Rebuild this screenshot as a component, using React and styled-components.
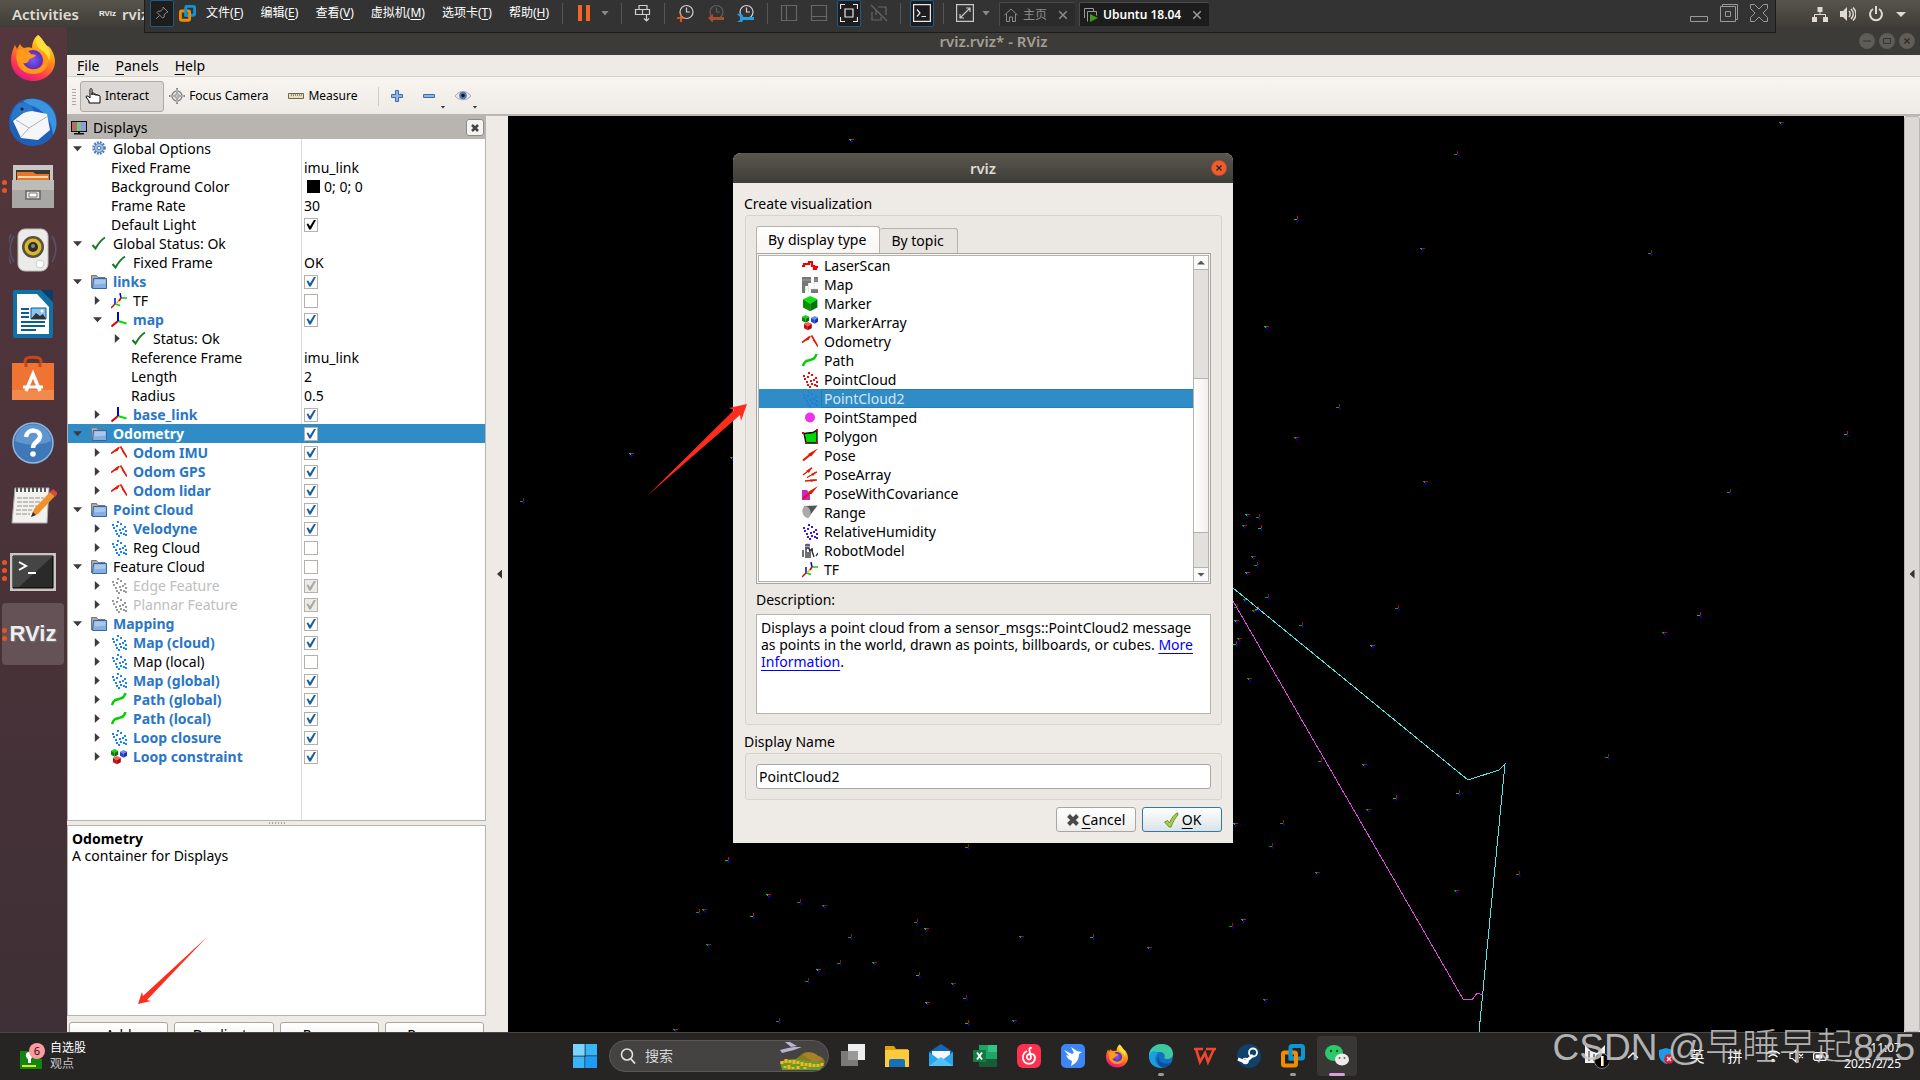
import { useState } from 'react';
import styled, { createGlobalStyle, css } from 'styled-components';

const GlobalStyle = createGlobalStyle`
  * { box-sizing: border-box; }
  body {
    margin: 0;
    background: #000;
    font-family: 'Noto Sans', 'Noto Sans CJK SC', sans-serif;
    font-size: 14px;
    line-height: 18px;
    color: #000;
  }
  button, input {
    font: inherit;
    color: inherit;
    margin: 0;
  }
  svg { display: block; flex: none; }
`;

/* ---------- desktop ---------- */

const Desktop = styled.div`
  display: flex;
  flex-direction: column;
  height: 100vh;
  position: relative;
  overflow: hidden;
`;

const Guest = styled.div`
  flex: 1;
  min-height: 0;
  display: flex;
  flex-direction: column;
  position: relative;
  overflow: hidden;
`;

const GnomeBar = styled.header`
  flex: none;
  height: 27px;
  display: flex;
  align-items: center;
  padding: 0 14px 0 12px;
  gap: 20px;
  background: linear-gradient(#57544b, #3f3d38);
  color: #dfdbd2;
  font-size: 15px;
  font-weight: 600;
`;

const GnomeApp = styled.span`
  display: flex;
  align-items: center;
  gap: 6px;
`;

const GnomeStatus = styled.div`
  margin-left: auto;
  display: flex;
  align-items: center;
  gap: 12px;
`;

const PlainButton = styled.button`
  border: 0;
  padding: 0;
  background: none;
  display: flex;
  align-items: center;
  justify-content: center;
`;

const Session = styled.div`
  flex: 1;
  min-height: 0;
  display: flex;
`;

const Dock = styled.nav`
  flex: none;
  width: 67px;
  background: linear-gradient(#54373d, #483238 60%, #3e3036);
  display: flex;
  flex-direction: column;
`;

const DockItem = styled.button`
  height: 62px;
  margin: 0 3px 2px 2px;
  padding: 0;
  border: 0;
  border-radius: 4px;
  background: ${({ $active }) => ($active ? '#655256' : 'none')};
  display: grid;
  place-items: center;
  position: relative;
`;

const RunningDots = styled.span`
  position: absolute;
  left: 0;
  top: 0;
  bottom: 0;
  display: flex;
  flex-direction: column;
  justify-content: center;
  gap: 3px;

  i {
    width: 5px;
    height: 5px;
    border-radius: 50%;
    background: #e95420;
  }
`;

/* ---------- host toolbar ---------- */

const HostBar = styled.div`
  position: absolute;
  left: 144px;
  right: 144px;
  top: 0;
  height: 33px;
  padding: 0 7px 6px 5px;
  display: flex;
  align-items: center;
  background: #333;
  border: solid #1c1c1c;
  border-width: 0 1px 1px;
  font-size: 12px;
  color: #fff;
`;

const PinButton = styled(PlainButton)`
  width: 24px;
  height: 27px;
  margin-right: 5px;
  background: #1d1d1d;
  border: 1px solid #235a85;
  border-radius: 2px;
`;

const HostMenus = styled.div`
  display: flex;
  gap: 17px;
  padding: 0 13px 0 10px;
  white-space: nowrap;

  u { text-underline-offset: 2px; }
`;

const HostTools = styled.div`
  display: flex;
  align-items: center;
  gap: 12px;
`;

const HostTool = styled(PlainButton)`
  width: 18px;
  height: 18px;
  ${({ $boxed }) => $boxed && css`
    width: 24px;
    height: 27px;
    margin: 0 -3px;
    background: #1d1d1d;
    border: 1px solid #235a85;
    border-radius: 2px;
  `}
`;

const HostRule = styled.span`
  width: 1px;
  height: 21px;
  background: #555;
`;

const Caret = styled.span`
  width: 8px;
  height: 5px;
  margin-left: -4px;
  background: #8a8a8a;
  clip-path: polygon(0 0, 100% 0, 50% 100%);
`;

const HostTabs = styled.div`
  display: flex;
  gap: 4px;
  align-self: flex-end;
  margin-left: 9px;
`;

const HostTab = styled.div`
  height: 24px;
  padding: 0 7px 0 4px;
  display: flex;
  align-items: center;
  gap: 5px;
  border: solid #4a4a4a;
  border-width: 1px 0 0 1px;
  border-radius: 2px 2px 0 0;
  background: ${({ $active }) => ($active ? '#1c1c1c' : '#2b2b2b')};
  color: ${({ $active }) => ($active ? '#fff' : '#8d8d8d')};
  font-weight: ${({ $active }) => ($active ? 600 : 400)};

  button { margin-left: 6px; }
`;

const HostWindowButtons = styled.div`
  margin-left: auto;
  display: flex;
  gap: 12px;
`;

/* ---------- rviz window ---------- */

const Window = styled.main`
  flex: 1;
  min-width: 0;
  display: flex;
  flex-direction: column;
  background: #eeebe7;
`;

const WindowTitle = styled.div`
  flex: none;
  height: 28px;
  display: grid;
  grid-template-columns: 1fr auto 1fr;
  align-items: center;
  padding: 0 5px;
  background: #3c3b37;
  color: #a39f96;
  font-size: 15px;
  font-weight: 600;

  h1 {
    grid-column: 2;
    margin: 0;
    font: inherit;
  }
`;

const TitleButtons = styled.div`
  display: flex;
  justify-content: flex-end;
  gap: 4px;
`;

const MenuBar = styled.div`
  flex: none;
  height: 22px;
  display: flex;
  align-items: center;
  gap: 16px;
  padding: 0 10px;
  border-bottom: 1px solid #d4d1cd;

  u { text-underline-offset: 3px; }
`;

const ToolBar = styled.div`
  flex: none;
  height: 39px;
  display: flex;
  align-items: center;
  padding: 1px 0 0 5px;
  background: linear-gradient(#f8f5f1, #eeebe7);
  border-bottom: 2px solid #bab6b1;
  font-size: 12px;
`;

const Grip = styled.span`
  width: 4px;
  height: 17px;
  margin-right: 4px;
  background: radial-gradient(circle, #aaa 40%, transparent 45%) 0 0 / 2px 3px;
`;

const ToolButton = styled.button`
  height: 31px;
  padding: 0 14px 0 4px;
  display: flex;
  align-items: center;
  gap: 4px;
  border: 1px solid ${({ $pressed }) => ($pressed ? '#aeaaa6' : 'transparent')};
  border-radius: 3px;
  background: ${({ $pressed }) => ($pressed ? '#dcd8d5' : 'none')};
`;

const ToolRule = styled.span`
  width: 1px;
  height: 19px;
  margin: 0 12px 0 6px;
  background: #d0ccc8;
`;

const SmallTool = styled(PlainButton)`
  width: 32px;
  height: 31px;
  justify-content: flex-start;
  position: relative;
`;

const SmallCaret = styled.span`
  position: absolute;
  right: 10px;
  bottom: 3px;
  width: 5px;
  height: 3px;
  background: #333;
  clip-path: polygon(0 0, 100% 0, 50% 100%);
`;

const Workspace = styled.div`
  flex: 1;
  min-height: 0;
  display: flex;
`;

const Sidebar = styled.aside`
  flex: none;
  width: 419px;
  display: flex;
  flex-direction: column;
`;

const PanelTitle = styled.div`
  flex: none;
  height: 23px;
  display: flex;
  align-items: center;
  gap: 6px;
  padding: 0 2px 0 4px;
  background: #b8b4b0;

  h2 {
    margin: 0;
    font: inherit;
  }
`;

const PanelClose = styled(PlainButton)`
  width: 18px;
  height: 17px;
  margin-left: auto;
  border: 1px solid #8f8b87;
  border-radius: 3px;
  background: #f6f4f2;
`;

const Tree = styled.div`
  flex: 1;
  min-height: 0;
  border: solid #b6b2ad;
  border-width: 0 1px 1px;
  background: linear-gradient(#dddbd9, #dddbd9) 233px 0 / 1px 100% no-repeat #fff;
`;

const TreeRow = styled.div`
  height: 19px;
  display: grid;
  grid-template-columns: 236px 1fr;
  align-items: center;
  background: ${({ $selected }) => ($selected ? '#308cc6' : 'none')};
`;

const TreeName = styled.span`
  display: flex;
  align-items: center;
  padding-left: ${({ $level }) => $level * 20}px;
  white-space: nowrap;
  color: ${({ $tone }) => ({ link: '#2a76c6', off: '#bebebe', selected: '#fff' })[$tone] || '#000'};
  font-weight: ${({ $bold }) => ($bold ? 700 : 400)};

  svg { margin-right: 6px; }
`;

const Expander = styled.span`
  width: 9px;
  height: 9px;
  margin: 0 9px 0 5px;
  background: ${({ $state }) => ($state ? '#3c3c3c' : 'none')};
  clip-path: ${({ $state }) => ($state === 'open'
    ? 'polygon(0 25%, 100% 25%, 50% 80%)'
    : 'polygon(20% 0, 75% 50%, 20% 100%)')};
`;

const TreeValue = styled.span`
  display: flex;
  align-items: center;
  gap: 4px;
`;

const Swatch = styled.span`
  width: 13px;
  height: 13px;
  margin-left: 3px;
  background: #000;
`;

const CheckBox = styled.input.attrs({ type: 'checkbox' })`
  appearance: none;
  width: 14px;
  height: 14px;
  border: 1px solid #b4b0ac;
  background: ${({ disabled }) => (disabled ? '#edebe8' : '#fff')};
  display: grid;
  place-items: center;

  &:checked::before {
    content: '';
    width: 10px;
    height: 10px;
    background: ${({ disabled, $dark }) => (disabled ? '#aaa7a4' : $dark ? '#000' : '#1b5fa0')};
    clip-path: polygon(5% 45%, 22% 40%, 40% 68%, 82% 0, 100% 6%, 48% 100%, 32% 100%);
  }
`;

const SplitGrip = styled.span`
  flex: none;
  align-self: center;
  width: 17px;
  height: 4px;
  background: radial-gradient(circle, #a8a5a1 40%, transparent 45%) 0 0 / 3px 4px;
`;

const HelpPane = styled.div`
  flex: none;
  height: 191px;
  padding: 4px;
  border: 1px solid #b6b2ad;
  background: #fff;
  line-height: 17px;

  p { margin: 0; }
`;

const SidebarButtons = styled.div`
  flex: none;
  height: 16px;
  padding: 6px 2px 0;
  display: grid;
  grid-template-columns: repeat(4, 1fr);
  gap: 6px;
  overflow: hidden;
`;

const PushButton = styled.button`
  height: 25px;
  padding: 0 9px;
  display: flex;
  align-items: center;
  justify-content: center;
  gap: 3px;
  border: 1px solid ${({ $primary }) => ($primary ? '#2d7ba8' : '#aaa6a2')};
  border-radius: 3px;
  background: ${({ $primary }) => ($primary
    ? 'linear-gradient(#fdfefe, #dbe3e7)'
    : 'linear-gradient(#fff, #efedeb)')};

  u { text-underline-offset: 3px; }
`;

const CollapseStrip = styled.button`
  flex: none;
  width: ${({ $edge }) => ($edge ? 16 : 22)}px;
  padding: 0;
  border: 1px solid ${({ $edge }) => ($edge ? '#bbb7b3' : 'transparent')};
  border-radius: 3px;
  background: ${({ $edge }) => ($edge ? '#dcd8d5' : 'none')};
  display: flex;
  align-items: center;
  justify-content: ${({ $edge }) => ($edge ? 'center' : 'flex-end')};
  padding-right: ${({ $edge }) => ($edge ? 0 : 5)}px;

  span {
    width: 5px;
    height: 9px;
    background: #333;
    clip-path: polygon(100% 0, 100% 100%, 0 50%);
  }
`;

const RenderView = styled.svg`
  flex: 1;
  min-width: 0;
  width: 100%;
  height: 100%;
  background: #000;
`;

/* ---------- dialog ---------- */

const Dialog = styled.section`
  position: absolute;
  left: 733px;
  top: 153px;
  width: 500px;
  background: #eeebe7;
  border-radius: 8px 8px 0 0;
`;

const DialogTitle = styled.div`
  height: 30px;
  display: grid;
  grid-template-columns: 1fr auto 1fr;
  align-items: center;
  justify-items: end;
  padding: 0 6px;
  border-radius: 8px 8px 0 0;
  background: linear-gradient(#5a574f, #3e3d39);
  color: #dfdbd2;
  font-size: 15px;
  font-weight: 600;

  h2 {
    grid-column: 2;
    margin: 0;
    font: inherit;
  }
`;

const DialogBody = styled.div`
  padding: 4px 11px 11px;
`;

const GroupLabel = styled.label`
  display: block;
  margin: 8px 0 2px;
`;

const Group = styled.div`
  padding: 10px;
  border: 1px solid #d6d2cd;
  border-radius: 3px;
  background: #ebe8e3;
  margin-left: 1px;
`;

const Tabs = styled.div`
  display: flex;
  align-items: flex-end;
`;

const Tab = styled.button`
  height: ${({ $active }) => ($active ? 27 : 25)}px;
  padding: 0 13px 0 11px;
  border: 1px solid #b6b2ad;
  border-bottom: 0;
  border-radius: 3px 3px 0 0;
  background: ${({ $active }) => ($active ? 'linear-gradient(#fff, #f8f6f3)' : '#e7e4e0')};
  ${({ $active }) => !$active && css`border-left: 0;`}
`;

const TabPage = styled.div`
  padding: 1px;
  border: 1px solid #aaa6a2;
  background: #f6f4f2;
`;

const TypeList = styled.div`
  height: 327px;
  display: flex;
  border: 1px solid #b6b2ad;
  background: #fff;
`;

const TypeItems = styled.div`
  flex: 1;
  overflow: hidden;
`;

const TypeItem = styled.div`
  height: 19px;
  padding-left: 43px;
  display: flex;
  align-items: center;
  background: ${({ $selected }) => ($selected ? '#308cc6' : 'none')};
  color: ${({ $selected }) => ($selected ? '#d4e6f3' : '#000')};

  span {
    flex: 1;
    height: 19px;
    margin-left: 3px;
    padding-left: 2px;
    border: 1px solid ${({ $selected }) => ($selected ? '#2a7db3' : 'transparent')};
    border-right: 0;
    line-height: 17px;
  }
`;

const ScrollBar = styled.div`
  width: 15px;
  display: flex;
  flex-direction: column;
  border-left: 1px solid #b6b2ad;
  background: #e2e0dd;
`;

const ScrollStep = styled(PlainButton)`
  height: 14px;
  background: #fafafa;
  border: solid #b6b2ad;
  border-width: ${({ $down }) => ($down ? '1px 0 0' : '0 0 1px')};

  span {
    width: 8px;
    height: 4px;
    background: #555;
    clip-path: ${({ $down }) => ($down
    ? 'polygon(0 0, 100% 0, 50% 100%)'
    : 'polygon(0 100%, 100% 100%, 50% 0)')};
  }
`;

const ScrollTrack = styled.div`
  flex: 1;
  padding-top: 108px;
`;

const ScrollThumb = styled.div`
  height: 155px;
  border: solid #b6b2ad;
  border-width: 1px 0;
  background: linear-gradient(90deg, #fff, #f1efed);
`;

const DescriptionLabel = styled.div`
  margin: 7px 0 5px;
`;

const DescriptionBox = styled.div`
  height: 100px;
  padding: 4px;
  border: 1px solid #b6b2ad;
  background: #fff;
  line-height: 17px;

  a {
    color: #00f;
    text-underline-offset: 3px;
  }
`;

const TextField = styled.input`
  display: block;
  width: 100%;
  height: 25px;
  padding: 0 2px;
  border: 1px solid #aaa6a2;
  border-radius: 3px;
  background: #fff;
`;

const DialogButtons = styled.div`
  display: flex;
  justify-content: flex-end;
  gap: 6px;
  margin-top: 7px;

  button { width: 80px; }
`;

const Annotation = styled.svg`
  position: absolute;
  left: ${({ $left }) => $left}px;
  top: ${({ $top }) => $top}px;
`;

/* ---------- taskbar ---------- */

const TaskBar = styled.footer`
  flex: none;
  height: 48px;
  display: grid;
  grid-template-columns: 1fr auto 1fr;
  align-items: center;
  padding: 0 19px 2px;
  border-top: 1px solid #484746;
  background: #262524;
  color: #fff;
  font-size: 12px;
  line-height: 16px;
`;

const NewsWidget = styled(PlainButton)`
  justify-self: start;
  gap: 5px;
  text-align: left;

  small {
    display: block;
    font-size: 12px;
    color: #c4c4c4;
  }
`;

const TaskGroup = styled.div`
  display: flex;
  align-items: center;
  gap: 4px;
  margin-left: 2px;
`;

const TaskButton = styled(PlainButton)`
  width: 40px;
  height: 40px;
  border-radius: 4px;
  position: relative;
  background: ${({ $active }) => ($active ? '#383736' : 'none')};

  &::after {
    content: '';
    position: absolute;
    bottom: 0;
    width: ${({ $active }) => ($active ? 16 : 6)}px;
    height: 3px;
    border-radius: 2px;
    background: ${({ $active, $running }) => ($active ? '#dc9ce0' : $running ? '#9a9a9a' : 'none')};
  }
`;

const SearchBox = styled.label`
  width: 220px;
  height: 32px;
  padding: 0 3px 0 10px;
  display: flex;
  align-items: center;
  gap: 9px;
  border: 1px solid #5a5958;
  border-radius: 16px;
  background: #444342;

  input {
    flex: 1;
    min-width: 0;
    border: 0;
    padding: 0;
    background: none;
    font-size: 14px;
  }
  input::placeholder {
    color: #d8d8d8;
    opacity: 1;
  }
`;

const Tray = styled.div`
  justify-self: end;
  display: flex;
  align-items: center;
  font-size: 15px;
`;

const TrayItem = styled.span`
  width: ${({ $width }) => $width}px;
  display: flex;
  justify-content: center;
`;

const Clock = styled.time`
  width: 68px;
  text-align: right;
  font-size: 12px;
`;

const Watermark = styled.div`
  position: absolute;
  right: 5px;
  bottom: 10px;
  font-family: 'Liberation Sans', 'Noto Sans CJK SC', sans-serif;
  font-size: 37px;
  font-weight: 300;
  line-height: 44px;
  color: rgba(205, 205, 205, 0.85);
  white-space: nowrap;
  pointer-events: none;
`;

/* ---------- small icons ---------- */

const Svg16 = ({ children, size = 16, box = 16 }) => (
  <svg width={size} height={size} viewBox={`0 0 ${box} ${box}`} fill="none" aria-hidden="true">
    {children}
  </svg>
);

const CLOUD_DOTS = [[6, 0], [1, 3], [5, 4], [9, 2], [13, 5], [2, 6], [4, 9], [8, 8], [11, 7], [14, 9], [5, 12], [9, 11], [12, 12], [7, 14], [14, 13]];

const CloudIcon = ({ color = '#1a84f0' }) => (
  <Svg16>
    {CLOUD_DOTS.map(([x, y]) => (
      <rect key={`${x}-${y}`} x={x} y={y} width="2" height="2" fill={color} />
    ))}
  </Svg16>
);

const FolderIcon = () => (
  <Svg16>
    <path d="M.5 14V1.500h5l1.500 2h7V5" fill="#aaa" stroke="#777" />
    <path d="M2.500 4.500h13v10h-14z" fill="#84afdf" stroke="#3465a4" />
    <path d="M3.500 5.500h11v4l-11 1z" fill="#a9c8ea" />
  </Svg16>
);

const CheckIcon = () => (
  <Svg16>
    <path d="M1.500 9l3 3.500C7 8 10 4 14 1.500" stroke="#1b7a24" strokeWidth="2" />
  </Svg16>
);

const GearIcon = () => (
  <Svg16>
    <circle cx="8" cy="7" r="5.500" stroke="#4a7ab8" strokeWidth="2.500" strokeDasharray="1.800 1.100" />
    <circle cx="8" cy="7" r="4.500" fill="#a4c0e4" stroke="#5a88c4" />
    <circle cx="8" cy="7" r="1.800" fill="#fff" stroke="#4a7ab8" />
  </Svg16>
);

const AxesIcon = () => (
  <Svg16>
    <path d="M7 9L.500 14.500" stroke="#e00000" strokeWidth="2" />
    <path d="M7 9l8.500 2.500" stroke="#00e000" strokeWidth="2" />
    <path d="M7 9V0" stroke="#0000e8" strokeWidth="2" />
  </Svg16>
);

const TfIcon = () => (
  <Svg16>
    <path d="M4 11L0 15" stroke="#e00000" strokeWidth="1.500" />
    <path d="M4 11l5 1.500M10 5h6" stroke="#00d800" strokeWidth="1.500" />
    <path d="M4 11V5M10 5L9 0" stroke="#0000e8" strokeWidth="1.500" />
    <path d="M5 11l5-6" stroke="#e8c020" strokeWidth="1.500" />
    <path d="M8 8l2-3" stroke="#e00000" strokeWidth="1.500" />
  </Svg16>
);

const OdomIcon = () => (
  <Svg16>
    <path d="M0 8.500l8-6M9.500 1.500L16 12.500" stroke="#e81800" strokeWidth="1.600" />
    <path d="M3 7l6.500-6-3 5zM11 3l2.500 6 2.500 4-5-6.500z" fill="#e81800" />
  </Svg16>
);

const PathIcon = () => (
  <Svg16>
    <path d="M1 13c2-6 4-5 7-6s5-1 6.500-6" stroke="#00d000" strokeWidth="2.500" />
  </Svg16>
);

const Cube = ({ x, y, s, top, left, right }) => (
  <g transform={`translate(${x} ${y}) scale(${s})`}>
    <path d="M0 3.500L7.500 0 15 3.500 7.500 8z" fill={top} />
    <path d="M0 3.500L7.500 8v8L0 12z" fill={left} />
    <path d="M15 3.500L7.500 8v8L15 12z" fill={right} />
  </g>
);

const MarkerIcon = () => (
  <Svg16>
    <Cube x={1} y={0} s={0.96} top="#0be00b" left="#069006" right="#077407" />
  </Svg16>
);

const MarkerArrayIcon = () => (
  <Svg16>
    <Cube x={0} y={0} s={0.48} top="#10d810" left="#088808" right="#0a700a" />
    <Cube x={9} y={1} s={0.48} top="#6b8ff5" left="#2346d0" right="#1830a8" />
    <Cube x={2} y={7} s={0.52} top="#f06060" left="#d01010" right="#a80c0c" />
  </Svg16>
);

const LaserIcon = () => (
  <Svg16>
    <path d="M0 8h2V6h5V4h3v4h2v3h2V9h2" stroke="#f00000" strokeWidth="2.200" />
  </Svg16>
);

const MapIcon = () => (
  <Svg16>
    <path d="M0 0h9v6H6v3H3v7H0zM12 0h4v5h-4zM9 12h7v4H9z" fill="#777" />
    <path d="M3.500 9v6M6.500 6v9M0 3h16M3 12h13M9 6h7M12 6v6" stroke="#ccc" strokeWidth=".5" />
  </Svg16>
);

const StampedIcon = () => (
  <Svg16>
    <circle cx="8" cy="7.500" r="5" fill="#f030f0" />
  </Svg16>
);

const PolygonIcon = () => (
  <Svg16>
    <path d="M2 4.500l9-1 4-2.500v13H4z" fill="#00d800" stroke="#000" strokeWidth="1.300" />
    <path d="M0 3h2v2H0zM14 0h2v2h-2zM14 13h2v2h-2zM3 13h2v2H3z" fill="#e00" />
  </Svg16>
);

const PoseIcon = () => (
  <Svg16>
    <path d="M1 12.500l8-6.500" stroke="#e01800" strokeWidth="2.200" />
    <path d="M6 6l10-5.500-7 8z" fill="#e01800" />
  </Svg16>
);

const PoseArrayIcon = () => (
  <Svg16>
    <path d="M1 8l9-7M5 10.500L15 5M3 14l12-1" stroke="#e01800" strokeWidth="1.300" />
    <path d="M4 4l6-4-3 6zM9 7l6-3-4 5zM8 12.500l7 0-6 2.500z" fill="#e01800" />
  </Svg16>
);

const PoseCovIcon = () => (
  <Svg16>
    <path d="M0 4h5l3 5v5H0z" fill="#c82ac8" />
    <path d="M1 12.500l8-6.500" stroke="#e01800" strokeWidth="2.200" />
    <path d="M6 6l10-6-7 8.500z" fill="#e01800" />
  </Svg16>
);

const RangeIcon = () => (
  <Svg16>
    <path d="M2 1l13.500-.500L6 13z" fill="#555" />
    <ellipse cx="4.500" cy="7" rx="4" ry="6" fill="#aaa" transform="rotate(-15 4.500 7)" />
  </Svg16>
);

const RobotIcon = () => (
  <Svg16>
    <path d="M3 1.500c0-1 5-1 5 0v2H3z" fill="#555e80" />
    <path d="M1 7v7M3 5h4l1 4v6M4 6v9M6 9v6M10 5v3l2 6M14 13l2-3M8 7h3" stroke="#222" strokeWidth="1.300" />
  </Svg16>
);

const WrenchStubIcon = () => (
  <Svg16>
    <path d="M1 0h2v3H1zM12 0h3v3h-3z" fill="#111" />
  </Svg16>
);

const MonitorIcon = () => (
  <Svg16>
    <path d="M0 1h16v11H0z" fill="#111" />
    <path d="M1 2h5v9H1z" fill="#b86a6a" />
    <path d="M6 2h4v9H6z" fill="#6fc98a" />
    <path d="M10 2h5v9h-5z" fill="#9a98d8" />
    <path d="M7 12h2v1h4v1.500H3V13h4z" fill="#111" />
  </Svg16>
);

const CrossGlyph = ({ color = '#444', size = 8, width = 2.5 }) => (
  <Svg16 size={size} box={8}>
    <path d="M1 1l6 6M7 1L1 7" stroke={color} strokeWidth={width} />
  </Svg16>
);

const HandIcon = () => (
  <Svg16>
    <path d="M5 9V2c0-2 2-2 2 0v5V5.500c0-1 2-1 2 0V7c0-1.500 2-1.500 2 0v.500c0-1.300 2-1.300 2 0V8c0-1 2-1 2 .500V15H4v-2L1 9c0-1.500 2-1.500 4 1z" fill="#fff" stroke="#000" />
  </Svg16>
);

const FocusIcon = () => (
  <Svg16>
    <circle cx="8" cy="8" r="5" stroke="#888" strokeWidth="1.500" />
    <circle cx="8" cy="8" r="2.500" stroke="#999" />
    <path d="M8 0v16M0 8h16" stroke="#888" strokeWidth="2" />
    <path d="M8 1v14M1 8h14" stroke="#eee" strokeWidth=".7" />
  </Svg16>
);

const RulerIcon = () => (
  <Svg16>
    <path d="M.500 5.500h15v5H.500z" fill="#e9dfb0" stroke="#6a6a5a" />
    <path d="M3.500 6v2M5.500 6v2M7.500 6v2M9.500 6v2M11.500 6v2M13.500 6v2" stroke="#777" strokeWidth=".8" />
  </Svg16>
);

const PlusIcon = () => (
  <Svg16 size={12} box={12}>
    <path d="M4.500.500h3v4h4v3h-4v4h-3v-4h-4v-3h4z" fill="#8cb4e4" stroke="#3a6cb0" />
  </Svg16>
);

const MinusIcon = () => (
  <Svg16 size={12} box={12}>
    <path d="M.500 4.500h11v3H.500z" fill="#8cb4e4" stroke="#3a6cb0" />
  </Svg16>
);

const EyeIcon = () => (
  <Svg16>
    <path d="M0 8c4-6 12-6 16 0-4 5-12 5-16 0z" fill="#e8e8e8" stroke="#aaa" />
    <circle cx="8" cy="7.500" r="3.800" fill="#5a74b0" />
    <circle cx="8" cy="7.500" r="1.800" fill="#101828" />
  </Svg16>
);

const OkIcon = () => (
  <Svg16>
    <path d="M1.500 10l3-1.500 2 2.500C8.500 6 11 2.500 14.500.800L15 3c-3 3-5 7-7 12H6z" fill="#a6d04a" stroke="#5d7f1e" strokeWidth=".8" />
  </Svg16>
);

const RoundButton = ({ kind, hot }) => (
  <Svg16>
    <circle cx="8" cy="8" r="7.700" fill={hot ? '#ee5d30' : '#5f5d57'} stroke={hot ? '#c03c14' : '#5f5d57'} strokeWidth=".6" />
    {kind === 'min' && <path d="M4 8h8" stroke="#35342f" />}
    {kind === 'max' && <path d="M4.500 5.500h7v5h-7z" stroke="#35342f" />}
    {kind === 'close' && <path d="M5.500 5.500l5 5M10.500 5.500l-5 5" stroke="#35241f" strokeWidth="1.200" />}
  </Svg16>
);

/* ---------- host toolbar icons ---------- */

// two interlocked rounded squares
const VmwareIcon = ({ size = 18 }) => (
  <Svg16 size={size} box={24}>
    <rect x="9.500" y="2" width="12.500" height="12.500" rx="1.500" stroke="#0d96d6" strokeWidth="4" />
    <rect x="2" y="8.500" width="13" height="13" rx="1.500" stroke="#f28b00" strokeWidth="4" />
    <path d="M9.500 6v8.500H13" stroke="#0d96d6" strokeWidth="4" />
  </Svg16>
);

const PinIcon = () => (
  <Svg16 size={14} box={14}>
    <path d="M8 1l5 5-1.500.500-2.500 2.500.300 2L7.500 12 2 6.500 3.500 5l2 .300L8 2.500zM4.500 9.500L1 13" stroke="#8a8a8a" />
  </Svg16>
);

const PauseIcon = () => (
  <Svg16 size={18} box={18}>
    <path d="M3 1h4v16H3zM11 1h4v16h-4z" fill="#f26522" />
  </Svg16>
);

const KeysIcon = () => (
  <Svg16 size={18} box={18}>
    <path d="M5 1.500h8v4H5zM1.500 5.500h7v5h-7zM8.500 5.500h7v5h-7zM12.500 10.500V17M10 14.500l2.500 2.500 2.500-2.500" stroke="#d0d0d0" strokeWidth="1.200" />
  </Svg16>
);

const ClockFace = ({ dim, children }) => (
  <Svg16 size={18} box={18}>
    <circle cx="9.500" cy="8" r="6.500" stroke={dim ? '#606060' : '#d0d0d0'} strokeWidth="1.200" />
    <path d="M9.500 3.500V8H13" stroke={dim ? '#606060' : '#d0d0d0'} strokeWidth="1.200" />
    {children}
  </Svg16>
);

const PanelToggleIcon = ({ d }) => (
  <Svg16 size={18} box={18}>
    <path d={d} stroke="#666" strokeWidth="1.200" />
  </Svg16>
);

/* ---------- dock and taskbar logos ---------- */

const FirefoxLogo = ({ size = 48 }) => (
  <svg width={size} height={size} viewBox="0 0 48 48" aria-hidden="true">
    <defs>
      <linearGradient id={`ff${size}`} x1=".8" y1="0" x2=".3" y2="1">
        <stop offset="0" stopColor="#fff14a" />
        <stop offset=".4" stopColor="#ff980e" />
        <stop offset=".75" stopColor="#ff3a4f" />
        <stop offset="1" stopColor="#e31587" />
      </linearGradient>
      <radialGradient id={`fg${size}`}>
        <stop offset="0" stopColor="#7a5af8" />
        <stop offset="1" stopColor="#5b2bb8" />
      </radialGradient>
    </defs>
    <path d="M29 1c5 4 6 8 9 11 3-1 8 9 8 15 0 12-10 20-22 20S2 38 2 26c0-6 2-11 4-15l2 4 3-5c1 2 2 3 4 4 3-1 6-1 8 0 0-5 2-10 6-13z" fill={`url(#ff${size})`} />
    <circle cx="24" cy="26" r="10" fill={`url(#fg${size})`} />
    <path d="M8 17c4-3 11-2 14 3l5 1c-1 3-6 3-7 5s-2 4-6 3c3 6 12 9 19 3 3-3 4-10 0-14 8 4 8 15 0 20-8 4-20 2-24-7-2-5-2-10-1-14z" fill="#ff9a1a" />
    <path d="M29 1c5 4 6 8 9 11 3 4 4 10 2 15-1-6-5-10-9-12-4-3-5-9-2-14z" fill="#ffdf3c" />
  </svg>
);

const ThunderbirdLogo = () => (
  <svg width="50" height="50" viewBox="0 0 50 50" aria-hidden="true">
    <path d="M10 6c8-7 25-6 33 3 8 10 8 24-1 33-7 7-16 8-24 6C7 45 1 35 1 25 1 17 5 9 10 6z" fill="#1f5fb8" />
    <path d="M15 4c9-5 22-1 29 8 5 7 6 18 1 26-1-12-7-23-18-28-5-2-9-3-12-6z" fill="#3a94e0" />
    <path d="M5 24l14-11 20 4 3 16-12 10-17-2z" fill="#f4f6f8" />
    <path d="M8 23l13 8 19-12M21 31l-8 9" stroke="#aab4c0" fill="none" />
    <path d="M11 6c5-1 13 1 15 8-4 0-11 1-15 5L3 24c0-7 3-14 8-18z" fill="#2a78cc" />
    <circle cx="14" cy="12" r="1.500" fill="#06182c" />
  </svg>
);

const FilesLogo = () => (
  <svg width="48" height="48" viewBox="0 0 48 48" aria-hidden="true">
    <path d="M4 3h40v18H4z" fill="#c9c7c4" />
    <path d="M7 8h34v14H7z" fill="#3a3634" />
    <path d="M8 10h16l3 2h13v10H8z" fill="#e8762a" />
    <path d="M9 14h30v2H9z" fill="#fbd9a8" />
    <path d="M3 18h42v28H3z" fill="#a9a7a4" />
    <path d="M3 18h42v10H3z" fill="#bebcb9" />
    <path d="M17 29h14v8H17z" fill="#e8e6e3" stroke="#666" strokeWidth="1.500" />
    <path d="M20 31h8v4h-8z" fill="#fff" stroke="#777" />
  </svg>
);

const SpeakerLogo = () => (
  <svg width="48" height="48" viewBox="0 0 48 48" aria-hidden="true">
    <path d="M5 10c-5 8-5 18 0 26M43 10c5 8 5 18 0 26M2 8c-4 9-4 21 0 30" stroke="#56628a" fill="none" strokeWidth="1.500" opacity=".7" />
    <rect x="9" y="3" width="30" height="42" rx="7" fill="#ebebe9" stroke="#bbb" />
    <circle cx="24" cy="21" r="11" fill="#55523e" />
    <circle cx="24" cy="21" r="8.500" fill="#d9b82a" />
    <circle cx="24" cy="21" r="5" fill="#2e2d2b" />
    <circle cx="24" cy="20" r="2" fill="#8a8880" />
    <circle cx="31" cy="38" r="4" fill="#fff" stroke="#ccc" />
  </svg>
);

const WriterLogo = () => (
  <svg width="48" height="50" viewBox="0 0 48 50" aria-hidden="true">
    <path d="M4 3a2 2 0 012-2h26l12 12v34a2 2 0 01-2 2H6a2 2 0 01-2-2z" fill="#1071a8" />
    <path d="M8 5h20l12 13v27H8z" fill="#fff" />
    <path d="M32 1h12v12z" fill="#0a3e66" />
    <path d="M12 20h8M12 24h8M12 28h8M12 33h24M12 37h24M12 41h15" stroke="#0d5c94" strokeWidth="2" />
    <path d="M22 19h15v11H22z" fill="#8ac4ee" stroke="#0d5c94" />
    <path d="M22 30l5-6 4 3 3-2 3 5z" fill="#333" />
    <circle cx="33" cy="22" r="1.500" fill="#fff" />
  </svg>
);

const SoftwareLogo = () => (
  <svg width="48" height="48" viewBox="0 0 48 48" aria-hidden="true">
    <path d="M16 14V7c0-5 16-5 16 0v7" stroke="#c6471c" strokeWidth="3" fill="none" />
    <path d="M3 9h42v37H3z" fill="#ef7434" />
    <path d="M3 36h42v10H3z" fill="#f38a4c" />
    <path d="M17 13V9M31 13V9" stroke="#c6471c" strokeWidth="3" />
    <path d="M17 37l7-17 7 17" stroke="#fff" strokeWidth="3.500" fill="none" />
    <path d="M14 33h20" stroke="#fff" strokeWidth="3" />
  </svg>
);

const HelpLogo = () => (
  <svg width="48" height="48" viewBox="0 0 48 48" aria-hidden="true">
    <circle cx="24" cy="25" r="20" fill="#3f78b8" stroke="#8fb4dc" strokeWidth="1.500" />
    <path d="M6 23c2-22 34-22 36 0-12 5-24 5-36 0z" fill="#5f96d0" />
    <path d="M17 19c1-9 15-8 14 0-1 5-7 5-7 11" stroke="#fff" strokeWidth="4.500" fill="none" />
    <circle cx="24" cy="36" r="2.800" fill="#fff" />
  </svg>
);

const GeditLogo = () => (
  <svg width="48" height="48" viewBox="0 0 48 48" aria-hidden="true">
    <path d="M6 6h34l-2 35H3z" fill="#f2f1ee" stroke="#aaa" />
    <path d="M8 5v5M12 5v5M16 5v5M20 5v5M24 5v5M28 5v5M32 5v5M36 5v5" stroke="#555" strokeWidth="2" />
    <path d="M8 16h27M8 20h24M8 24h20M7 28h16M7 32h14" stroke="#b5b3af" strokeWidth="1.500" strokeDasharray="5 1" />
    <path d="M22 35l3-8 16-17 5 4-17 18z" fill="#f0922c" />
    <path d="M41 10l3-3 5 4-3 4z" fill="#d8483c" />
    <path d="M22 35l2-5 3 3z" fill="#333" />
  </svg>
);

const TerminalLogo = () => (
  <svg width="48" height="48" viewBox="0 0 48 48" aria-hidden="true">
    <path d="M1 7h46v38H1z" fill="#c8c6c2" />
    <path d="M4 10h40v32H4z" fill="#2a2a2a" stroke="#000" />
    <path d="M4 10h40L10 41H4z" fill="#454545" />
    <path d="M10 16l7 4-7 4M19 27h8" stroke="#fff" strokeWidth="2" fill="none" />
  </svg>
);

const RvizWord = styled.span`
  font-family: 'Liberation Sans', sans-serif;
  font-size: ${({ $small }) => ($small ? 8 : 22)}px;
  font-weight: 700;
  line-height: 1;
  color: #eee;
  text-shadow: ${({ $small }) => ($small ? 'none' : '1px 1px 1px #777')};
`;

const StartLogo = () => (
  <Svg16 size={24} box={24}>
    <path d="M0 0h11.500v11.500H0zM12.500 0H24v11.500H12.500zM0 12.500h11.500V24H0zM12.500 12.500H24V24H12.500z" fill="#38b4f8" />
    <path d="M0 0h11.500v11.500H0z" fill="#7ad4fb" />
    <path d="M12.500 12.500H24V24H12.500z" fill="#1c9cf4" />
  </Svg16>
);

const FieldArt = () => (
  <svg width="46" height="28" viewBox="0 0 46 28" aria-hidden="true">
    <path d="M14 18c6-1 8-8 15-8s7 3 11 4 5 4 6 6l-3 6H8z" fill="#8a7a22" />
    <path d="M24 13c4-4 12-3 15 1l5 3-8 4z" fill="#a8802a" />
    <path d="M1 20c8-5 24-2 44 1l-4 7H3z" fill="#6a9a30" />
    <path d="M3 19v3M7 17v4M6 24v2M11 18v3M10 23v4M15 18v4M14 25v2M19 19v3M19 24v3M23 20v4M27 21v3M26 25v2M31 21v4M35 22v3M39 22v3M43 21v3" stroke="#f4b81c" strokeWidth="3" />
    <path d="M1 8l8-2 6-1 8 0-8 3-4 1-8 2zM6 0l6 5 6-1L11 0z" fill="#b9b4d4" />
  </svg>
);

const TASKS = [
  { name: 'Task view', icon: <Svg16 size={24} box={24}><path d="M7 0h17v16H7z" fill="#eee" /><path d="M0 7h17v15H0z" fill="#8a8a8a" opacity=".85" /></Svg16> },
  { name: 'Files', icon: <Svg16 size={24} box={24}><path d="M0 2h9l2 3h12v8H0z" fill="#e0a010" /><path d="M0 6h24v17H0z" fill="#fccb3c" /><path d="M4 17a2 2 0 012-2h12a2 2 0 012 2v6H4z" fill="#1670b8" /></Svg16> },
  { name: 'Mail', icon: <Svg16 size={24} box={24}><path d="M12 0l12 8v14H0V8z" fill="#1267b4" /><path d="M3 7h18v9H3z" fill="#f4f8fc" /><path d="M0 8l12 9 12-9v14H0z" fill="#2ba4ee" /><path d="M0 22l12-9 12 9z" fill="#54c0f8" /></Svg16> },
  { name: 'Excel', icon: <Svg16 size={24} box={24}><path d="M6 1h18v22H6z" fill="#21a366" /><path d="M15 1h9v7h-9z" fill="#33c481" /><path d="M6 15h18v8H6z" fill="#185c37" /><path d="M0 6h13v12H0z" fill="#107c41" /><path d="M4 8.500l5 7M9 8.500l-5 7" stroke="#fff" strokeWidth="1.800" /></Svg16> },
  { name: 'NetEase Music', icon: <Svg16 size={24} box={24}><rect width="24" height="24" rx="6" fill="#fc3150" /><path d="M15 4c-3-1-3 1-2 5l1 4c0 4-5 3-4-1 1-3 7-3 8 1 1 9-13 9-12 0 0-3 2-5 4-6" stroke="#fff" strokeWidth="1.800" /></Svg16> },
  { name: 'Bird', icon: <Svg16 size={24} box={24}><rect width="24" height="24" rx="5" fill="#3c86f8" /><path d="M3 6l8 4 4-3 6 1-3 2c0 5-2 9-8 12l1-5c-3-1-5-3-6-6l3 1zM10 3l6 4-3 2z" fill="#fff" /></Svg16> },
  { name: 'Firefox', icon: <FirefoxLogo size={24} /> },
  { name: 'Edge', running: true, icon: <Svg16 size={24} box={24}><circle cx="12" cy="12" r="12" fill="#1470c4" /><path d="M0 11C1-3 24-4 24 10c0 5-6 6-9 4 2-2 0-6-4-6-6 0-10 2-11 6z" fill="#3cc8a0" /><path d="M9 9c-6 6-1 14 6 15-5 0-15-1-15-12 1-5 7-6 9-3z" fill="#1aa0e0" /><path d="M10 12c-2 6 6 10 13 6-3 5-9 7-12 4s-4-7-1-10z" fill="#0c50a0" /></Svg16> },
  { name: 'WPS', icon: <Svg16 size={24} box={24}><path d="M1 5h9M3 5l4 13 5-9 3 9 6-13h2M13 5h7" stroke="#f0462c" strokeWidth="2.600" /></Svg16> },
  { name: 'Steam', icon: <Svg16 size={24} box={24}><circle cx="12" cy="12" r="12" fill="#10406c" /><path d="M1 15l7 3 5-4 3-3" stroke="#fff" strokeWidth="3" /><circle cx="16" cy="8.500" r="4" stroke="#fff" strokeWidth="1.800" /><circle cx="8.500" cy="17" r="2.500" stroke="#fff" strokeWidth="1.500" /></Svg16> },
  { name: 'VMware', running: true, icon: <VmwareIcon size={24} /> },
  { name: 'WeChat', active: true, icon: <Svg16 size={24} box={24}><ellipse cx="9" cy="9" rx="9" ry="8" fill="#2ec86a" /><circle cx="6" cy="7" r="1.200" fill="#0c5a2a" /><circle cx="12" cy="7" r="1.200" fill="#0c5a2a" /><ellipse cx="17" cy="15.500" rx="7" ry="6" fill="#ececec" /><circle cx="14.500" cy="14" r="1" fill="#666" /><circle cx="19.500" cy="14" r="1" fill="#666" /></Svg16> },
];

/* ---------- data ---------- */

const DISPLAYS = [
  { name: 'Global Options', icon: <GearIcon />, open: true },
  { name: 'Fixed Frame', level: 1, value: 'imu_link' },
  { name: 'Background Color', level: 1, value: '0; 0; 0', swatch: true },
  { name: 'Frame Rate', level: 1, value: '30' },
  { name: 'Default Light', level: 1, checked: true, dark: true },
  { name: 'Global Status: Ok', icon: <CheckIcon />, open: true },
  { name: 'Fixed Frame', level: 1, icon: <CheckIcon />, value: 'OK' },
  { name: 'links', icon: <FolderIcon />, open: true, tone: 'link', checked: true },
  { name: 'TF', level: 1, icon: <TfIcon />, open: false, checked: false },
  { name: 'map', level: 1, icon: <AxesIcon />, open: true, tone: 'link', checked: true },
  { name: 'Status: Ok', level: 2, icon: <CheckIcon />, open: false },
  { name: 'Reference Frame', level: 2, value: 'imu_link' },
  { name: 'Length', level: 2, value: '2' },
  { name: 'Radius', level: 2, value: '0.5' },
  { name: 'base_link', level: 1, icon: <AxesIcon />, open: false, tone: 'link', checked: true },
  { name: 'Odometry', icon: <FolderIcon />, open: true, tone: 'selected', checked: true },
  { name: 'Odom IMU', level: 1, icon: <OdomIcon />, open: false, tone: 'link', checked: true },
  { name: 'Odom GPS', level: 1, icon: <OdomIcon />, open: false, tone: 'link', checked: true },
  { name: 'Odom lidar', level: 1, icon: <OdomIcon />, open: false, tone: 'link', checked: true },
  { name: 'Point Cloud', icon: <FolderIcon />, open: true, tone: 'link', checked: true },
  { name: 'Velodyne', level: 1, icon: <CloudIcon />, open: false, tone: 'link', checked: true },
  { name: 'Reg Cloud', level: 1, icon: <CloudIcon />, open: false, checked: false },
  { name: 'Feature Cloud', icon: <FolderIcon />, open: true, checked: false },
  { name: 'Edge Feature', level: 1, icon: <CloudIcon color="#999" />, open: false, tone: 'off', checked: true },
  { name: 'Plannar Feature', level: 1, icon: <CloudIcon color="#999" />, open: false, tone: 'off', checked: true },
  { name: 'Mapping', icon: <FolderIcon />, open: true, tone: 'link', checked: true },
  { name: 'Map (cloud)', level: 1, icon: <CloudIcon />, open: false, tone: 'link', checked: true },
  { name: 'Map (local)', level: 1, icon: <CloudIcon />, open: false, checked: false },
  { name: 'Map (global)', level: 1, icon: <CloudIcon />, open: false, tone: 'link', checked: true },
  { name: 'Path (global)', level: 1, icon: <PathIcon />, open: false, tone: 'link', checked: true },
  { name: 'Path (local)', level: 1, icon: <PathIcon />, open: false, tone: 'link', checked: true },
  { name: 'Loop closure', level: 1, icon: <CloudIcon />, open: false, tone: 'link', checked: true },
  { name: 'Loop constraint', level: 1, icon: <MarkerArrayIcon />, open: false, tone: 'link', checked: true },
];

const TYPES = [
  ['LaserScan', <LaserIcon />],
  ['Map', <MapIcon />],
  ['Marker', <MarkerIcon />],
  ['MarkerArray', <MarkerArrayIcon />],
  ['Odometry', <OdomIcon />],
  ['Path', <PathIcon />],
  ['PointCloud', <CloudIcon color="#e80c0c" />],
  ['PointCloud2', <CloudIcon color="#1f7fd8" />],
  ['PointStamped', <StampedIcon />],
  ['Polygon', <PolygonIcon />],
  ['Pose', <PoseIcon />],
  ['PoseArray', <PoseArrayIcon />],
  ['PoseWithCovariance', <PoseCovIcon />],
  ['Range', <RangeIcon />],
  ['RelativeHumidity', <CloudIcon color="#3c14e8" />],
  ['RobotModel', <RobotIcon />],
  ['TF', <TfIcon />],
  ['', <WrenchStubIcon />],
];

const DOCK = [
  { name: 'Firefox', icon: <FirefoxLogo /> },
  { name: 'Thunderbird', icon: <ThunderbirdLogo /> },
  { name: 'Files', icon: <FilesLogo />, dots: 2 },
  { name: 'Rhythmbox', icon: <SpeakerLogo /> },
  { name: 'Writer', icon: <WriterLogo /> },
  { name: 'Software', icon: <SoftwareLogo /> },
  { name: 'Help', icon: <HelpLogo /> },
  { name: 'Text Editor', icon: <GeditLogo /> },
  { name: 'Terminal', icon: <TerminalLogo />, dots: 3 },
  { name: 'RViz', icon: <RvizWord>RViz</RvizWord>, dots: 2, active: true },
];

const HOST_MENUS = [['文件', 'F'], ['编辑', 'E'], ['查看', 'V'], ['虚拟机', 'M'], ['选项卡', 'T'], ['帮助', 'H']];

// frame axes scattered over the scene
const FRAMES = [
  [851, 140], [1457, 154], [1781, 123], [1297, 219], [1422, 249], [1651, 253], [1266, 327], [1339, 407],
  [1296, 438], [1847, 434], [1425, 482], [1730, 492], [631, 454], [523, 501], [732, 458], [1700, 615],
  [1664, 633], [1608, 757], [1247, 515], [1259, 517], [1244, 526], [1261, 528], [1253, 557], [1257, 565],
  [1247, 573], [1268, 597], [1245, 600], [1258, 609], [1254, 611], [1237, 607], [1236, 621], [1302, 625],
  [1239, 639], [1236, 644], [1249, 679], [1398, 608], [1372, 646], [1321, 761], [1364, 765], [1396, 798],
  [1368, 810], [1283, 823], [1235, 824], [1272, 846], [1317, 873], [1459, 793], [1456, 891], [1519, 874],
  [1243, 920], [1232, 926], [1265, 1000], [728, 860], [704, 910], [699, 912], [768, 895], [800, 902],
  [824, 906], [753, 916], [708, 945], [917, 922], [926, 929], [851, 937], [1021, 937], [1093, 937],
  [1149, 948], [840, 963], [818, 970], [808, 981], [874, 963], [919, 975], [953, 984], [966, 998],
  [927, 1003], [779, 1021], [1014, 1021], [968, 1023], [675, 1030], [968, 847],
];

const Scene = () => (
  <RenderView viewBox="508 116 1396 916" preserveAspectRatio="xMinYMin slice" shapeRendering="crispEdges">
    {FRAMES.map(([x, y], i) => (
      <g key={`${x}-${y}`} opacity={i % 3 ? 0.8 : 1}>
        <path d={i % 2 ? `M${x} ${y}h-3v1h3z` : `M${x - 2} ${y - 1}h2v2h-1v-1h-1z`} fill="#00d800" />
        <path d={i % 2 ? `M${x} ${y}h1v-3h-1z` : `M${x} ${y}h3v-1h-3z`} fill="#f00000" />
        <path d={`M${x} ${y}h1v1h1v1h-1v1h-1z`} fill="#0000f0" />
      </g>
    ))}
    <path d="M1233 588l235 192 31-10 6-6-26 268" fill="none" stroke="#4fe6e6" strokeWidth="1" />
    <path d="M1233 601l230 398 9 1 5-7 6 2" fill="none" stroke="#e04ce0" strokeWidth="1" />
  </RenderView>
);

const HostToolbar = () => (
  <HostBar>
    <PinButton aria-label="Pin"><PinIcon /></PinButton>
    <VmwareIcon size={17} />
    <HostMenus>
      {HOST_MENUS.map(([label, key]) => (
        <span key={key}>
          {label}
          (
          <u>{key}</u>
          )
        </span>
      ))}
    </HostMenus>
    <HostTools>
      <HostRule />
      <HostTool aria-label="Pause"><PauseIcon /></HostTool>
      <Caret />
      <HostRule />
      <HostTool aria-label="Send keys"><KeysIcon /></HostTool>
      <HostRule />
      <HostTool aria-label="Take snapshot">
        <ClockFace><path d="M4 10v8M0 14h8" stroke="#f26522" strokeWidth="1.600" /></ClockFace>
      </HostTool>
      <HostTool aria-label="Revert snapshot">
        <ClockFace dim><path d="M1 14l5-4v3h11v3H6v3z" fill="#a5502c" /></ClockFace>
      </HostTool>
      <HostTool aria-label="Manage snapshots">
        <ClockFace><path d="M0 10c5-1 6 1 6 3h11v3H6c0 2-3 3-6 2l3-2v-3z" fill="#2a9ce0" /></ClockFace>
      </HostTool>
      <HostRule />
      <HostTool aria-label="Library"><PanelToggleIcon d="M1.500 1.500h15v15h-15zM6.500 1.500v15" /></HostTool>
      <HostTool aria-label="Thumbnails"><PanelToggleIcon d="M1.500 1.500h15v15h-15zM1.500 12.500h15" /></HostTool>
      <HostTool $boxed aria-label="Full screen">
        <Svg16 size={18} box={18}>
          <path d="M.500 5V.500H5M13 .500h4.500V5M17.500 13v4.500H13M5 17.500H.500V13M5 5h8v8H5z" stroke="#e8e8e8" strokeWidth="1.200" />
        </Svg16>
      </HostTool>
      <HostTool aria-label="Unity"><PanelToggleIcon d="M1 1l16 16M8 3h8v8M2 8v8h9v-3M6 6v5" /></HostTool>
      <HostRule />
      <HostTool $boxed aria-label="Console">
        <Svg16 size={18} box={18}>
          <path d="M.600.600h16.800v16.800H.600zM4 5.500L7 9l-3 3.500M8.500 12.500H13" stroke="#e8e8e8" strokeWidth="1.200" />
        </Svg16>
      </HostTool>
      <HostRule />
      <HostTool aria-label="Stretch guest">
        <Svg16 size={18} box={18}>
          <path d="M.600.600h16.800v16.800H.600zM4 14L14 4M10 4h4v4M4 10v4h4" stroke="#c8c8c8" strokeWidth="1.200" />
        </Svg16>
      </HostTool>
      <Caret />
    </HostTools>
    <HostTabs>
      <HostTab>
        <Svg16 size={14} box={14}>
          <path d="M.500 7L7 1l6.500 6M2.500 6v7.500h3V9h3v4.500h3V6" stroke="#8d8d8d" />
        </Svg16>
        主页
        <PlainButton aria-label="Close tab"><CrossGlyph color="#8d8d8d" size={10} width={1.2} /></PlainButton>
      </HostTab>
      <HostTab $active>
        <Svg16 size={14} box={14}>
          <path d="M.500 10V.500h9V3M3.500 13.500v-10h9v4" stroke="#9a9a9a" />
          <path d="M6 6l8 4-8 4z" fill="#3f9a14" />
        </Svg16>
        Ubuntu 18.04
        <PlainButton aria-label="Close tab"><CrossGlyph color="#9a9a9a" size={10} width={1.2} /></PlainButton>
      </HostTab>
    </HostTabs>
    <HostWindowButtons>
      <HostTool aria-label="Minimize">
        <Svg16 size={18} box={18}><path d="M.500 12.500h17v5H.500z" stroke="#9a9a9a" /></Svg16>
      </HostTool>
      <HostTool aria-label="Restore">
        <Svg16 size={18} box={18}>
          <path d="M2.500 2.500v-2h15v15h-2M.500 2.500h15v15H.500zM5.500 7.500h5v5h-5z" stroke="#9a9a9a" />
        </Svg16>
      </HostTool>
      <HostTool aria-label="Close">
        <Svg16 size={18} box={18}>
          <path d="M.500.500h4L9 5 13.500.500h4v4L13 9l4.500 4.500v4h-4L9 13l-4.500 4.500h-4v-4L5 9 .500 4.500z" stroke="#9a9a9a" />
        </Svg16>
      </HostTool>
    </HostWindowButtons>
  </HostBar>
);

const DisplaysPanel = () => (
  <Sidebar>
    <PanelTitle>
      <MonitorIcon />
      <h2>Displays</h2>
      <PanelClose aria-label="Close panel"><CrossGlyph /></PanelClose>
    </PanelTitle>
    <Tree role="tree" aria-label="Displays">
      {DISPLAYS.map((d, i) => (
        // eslint-disable-next-line react/no-array-index-key
        <TreeRow key={i} role="treeitem" $selected={d.tone === 'selected'}>
          <TreeName $level={d.level || 0} $tone={d.tone} $bold={d.tone && d.tone !== 'off'}>
            <Expander $state={d.open === undefined ? '' : d.open ? 'open' : 'closed'} />
            {d.icon}
            {d.name}
          </TreeName>
          <TreeValue>
            {d.swatch && <Swatch />}
            {d.value}
            {d.checked !== undefined && (
              <CheckBox aria-label={d.name} defaultChecked={d.checked} disabled={d.tone === 'off'} $dark={d.dark} />
            )}
          </TreeValue>
        </TreeRow>
      ))}
    </Tree>
    <SplitGrip />
    <HelpPane>
      <p><b>Odometry</b></p>
      <p>A container for Displays</p>
    </HelpPane>
    <SidebarButtons>
      <PushButton>Add</PushButton>
      <PushButton>Duplicate</PushButton>
      <PushButton>Remove</PushButton>
      <PushButton>Rename</PushButton>
    </SidebarButtons>
  </Sidebar>
);

const CreateDialog = () => {
  const [name, setName] = useState('PointCloud2');
  return (
    <Dialog role="dialog" aria-label="rviz">
      <DialogTitle>
        <h2>rviz</h2>
        <PlainButton aria-label="Close"><RoundButton kind="close" hot /></PlainButton>
      </DialogTitle>
      <DialogBody>
        <GroupLabel as="div">Create visualization</GroupLabel>
        <Group>
          <Tabs role="tablist">
            <Tab role="tab" $active>By display type</Tab>
            <Tab role="tab">By topic</Tab>
          </Tabs>
          <TabPage>
            <TypeList>
              <TypeItems role="listbox" aria-label="Display type">
                {TYPES.map(([label, icon]) => (
                  <TypeItem key={label} role="option" $selected={label === 'PointCloud2'}>
                    {icon}
                    <span>{label}</span>
                  </TypeItem>
                ))}
              </TypeItems>
              <ScrollBar>
                <ScrollStep aria-label="Scroll up"><span /></ScrollStep>
                <ScrollTrack><ScrollThumb /></ScrollTrack>
                <ScrollStep $down aria-label="Scroll down"><span /></ScrollStep>
              </ScrollBar>
            </TypeList>
          </TabPage>
          <DescriptionLabel>Description:</DescriptionLabel>
          <DescriptionBox>
            Displays a point cloud from a sensor_msgs::PointCloud2 message as points in the world,
            drawn as points, billboards, or cubes.
            {' '}
            <a href="#more">More Information</a>
            .
          </DescriptionBox>
        </Group>
        <GroupLabel htmlFor="display-name">Display Name</GroupLabel>
        <Group>
          <TextField id="display-name" value={name} onChange={(e) => setName(e.target.value)} />
        </Group>
        <DialogButtons>
          <PushButton>
            <CrossGlyph color="#4a4a4a" size={12} width={2.6} />
            <span>
              <u>C</u>
              ancel
            </span>
          </PushButton>
          <PushButton $primary>
            <OkIcon />
            <span>
              <u>O</u>
              K
            </span>
          </PushButton>
        </DialogButtons>
      </DialogBody>
    </Dialog>
  );
};

const WindowsTaskbar = () => (
  <TaskBar>
    <NewsWidget>
      <Svg16 size={26} box={26}>
        <path d="M1 8h19v18H1zM20 16h3v10h-3z" fill="#12850f" />
        <path d="M3 22h14v2H3z" fill="#d8f000" />
        <path d="M10 9c4 0 4 5 2 7v4H9v-4c-3-2-3-7 1-7z" fill="#fff" />
        <circle cx="18" cy="8" r="8" fill="#ff99a4" />
        <text x="18" y="12" textAnchor="middle" fontSize="11" fill="#111">6</text>
      </Svg16>
      <span>
        自选股
        <small>观点</small>
      </span>
    </NewsWidget>
    <TaskGroup>
      <TaskButton aria-label="Start"><StartLogo /></TaskButton>
      <SearchBox>
        <Svg16>
          <circle cx="7" cy="6.500" r="5.500" stroke="#e0e0e0" strokeWidth="1.600" />
          <path d="M11 11l4 4.500" stroke="#e0e0e0" strokeWidth="1.800" />
        </Svg16>
        <input aria-label="搜索" placeholder="搜索" />
        <FieldArt />
      </SearchBox>
      {TASKS.map((t) => (
        <TaskButton key={t.name} aria-label={t.name} $running={t.running} $active={t.active}>
          {t.icon}
        </TaskButton>
      ))}
    </TaskGroup>
    <Tray>
      <TrayItem $width={46}>
        <Svg16 size={26} box={26}>
          <path d="M2 2l6 6 6 2 8-8v18H2z" fill="#f0f0f0" />
          <path d="M6 8v10M11 11v7" stroke="#222" />
          <circle cx="19" cy="18" r="7.500" fill="#000" stroke="#777" />
          <path d="M18 13h2v10h-2z" fill="#fff" />
          <path d="M20 13h1v10h-1z" fill="#e88a20" />
        </Svg16>
      </TrayItem>
      <TrayItem $width={28}>
        <Svg16 size={12} box={12}><path d="M1 8l5-5 5 5" stroke="#fff" strokeWidth="1.500" /></Svg16>
      </TrayItem>
      <TrayItem $width={38}>
        <Svg16>
          <path d="M8 0l7 2v5c0 4-3 7-7 9-4-2-7-5-7-9V2z" fill="#1e9ae8" />
          <circle cx="11" cy="11" r="4.800" fill="#d8202c" />
          <path d="M9 9l4 4M13 9l-4 4" stroke="#fff" strokeWidth="1.200" />
        </Svg16>
      </TrayItem>
      <TrayItem $width={24}>英</TrayItem>
      <TrayItem $width={52}>拼</TrayItem>
      <TrayItem $width={24}>
        <Svg16>
          <path d="M1 6c4-4 10-4 14 0M3.500 9c3-3 6-3 9 0" stroke="#fff" strokeWidth="1.300" />
          <circle cx="8" cy="12.500" r="1.800" fill="#fff" />
        </Svg16>
      </TrayItem>
      <TrayItem $width={24}>
        <Svg16>
          <path d="M1 5.500h2.500L7 2v12l-3.500-3.500H1zM10 6l4 4M14 6l-4 4" stroke="#fff" strokeWidth="1.100" />
        </Svg16>
      </TrayItem>
      <TrayItem $width={24}>
        <Svg16>
          <rect x=".600" y="4.600" width="12.800" height="7.800" rx="2" stroke="#fff" strokeWidth="1.200" />
          <path d="M2.500 6.500h7v4h-7zM14 7h1.500v3H14z" fill="#fff" />
        </Svg16>
      </TrayItem>
      <Clock>
        11:07
        <br />
        2025/2/25
      </Clock>
    </Tray>
  </TaskBar>
);

const App = () => (
  <Desktop>
    <GlobalStyle />
    <Guest>
      <GnomeBar>
        <span>Activities</span>
        <GnomeApp>
          <RvizWord $small>RViz</RvizWord>
          rviz
        </GnomeApp>
        <GnomeStatus>
          <Svg16>
            <path d="M5.500 1h5v5h-5zM0 11h5v5H0zM11 11h5v5h-5z" fill="#dfdbd2" />
            <path d="M8 6v3M2.500 12V8.500h11V12" stroke="#dfdbd2" />
          </Svg16>
          <Svg16>
            <path d="M0 5h3l4-4v14l-4-4H0z" fill="#dfdbd2" />
            <path d="M9 5c1.500 1.500 1.500 4.500 0 6M11 3c3 3 3 7 0 10M13 1.500c4 4 4 9 0 13" stroke="#dfdbd2" strokeWidth="1.500" />
          </Svg16>
          <Svg16>
            <path d="M5 3a6 6 0 106 0M8 0v8" stroke="#dfdbd2" strokeWidth="2" />
          </Svg16>
          <Svg16 size={10} box={10}><path d="M0 3h10L5 8z" fill="#dfdbd2" /></Svg16>
        </GnomeStatus>
      </GnomeBar>
      <Session>
        <Dock>
          {DOCK.map((d) => (
            <DockItem key={d.name} aria-label={d.name} $active={d.active}>
              {d.dots && (
                <RunningDots>
                  {Array.from({ length: d.dots }, (_, i) => <i key={i} />)}
                </RunningDots>
              )}
              {d.icon}
            </DockItem>
          ))}
        </Dock>
        <Window>
          <WindowTitle>
            <h1>rviz.rviz* - RViz</h1>
            <TitleButtons>
              <PlainButton aria-label="Minimize"><RoundButton kind="min" /></PlainButton>
              <PlainButton aria-label="Maximize"><RoundButton kind="max" /></PlainButton>
              <PlainButton aria-label="Close"><RoundButton kind="close" /></PlainButton>
            </TitleButtons>
          </WindowTitle>
          <MenuBar>
            <span>
              <u>F</u>
              ile
            </span>
            <span>
              <u>P</u>
              anels
            </span>
            <span>
              <u>H</u>
              elp
            </span>
          </MenuBar>
          <ToolBar>
            <Grip />
            <ToolButton $pressed>
              <HandIcon />
              Interact
            </ToolButton>
            <ToolButton>
              <FocusIcon />
              Focus Camera
            </ToolButton>
            <ToolButton>
              <RulerIcon />
              Measure
            </ToolButton>
            <ToolRule />
            <SmallTool aria-label="Add tool"><PlusIcon /></SmallTool>
            <SmallTool aria-label="Remove tool">
              <MinusIcon />
              <SmallCaret />
            </SmallTool>
            <SmallTool aria-label="Visibility">
              <EyeIcon />
              <SmallCaret />
            </SmallTool>
          </ToolBar>
          <Workspace>
            <DisplaysPanel />
            <CollapseStrip aria-label="Collapse left panel"><span /></CollapseStrip>
            <Scene />
            <CollapseStrip $edge aria-label="Expand right panel"><span /></CollapseStrip>
          </Workspace>
        </Window>
      </Session>
      <CreateDialog />
      <HostToolbar />
      <Annotation $left={647} $top={403} width="101" height="94" viewBox="0 0 101 94">
        <path d="M0 93L87 7l-5-2 18-4-6 17-1-6z" fill="#ff2b1c" />
      </Annotation>
      <Annotation $left={137} $top={937} width="71" height="69" viewBox="0 0 71 69">
        <path d="M70 0L10 63l4 1-13 3 4-12 1 4z" fill="#ff2b1c" />
      </Annotation>
    </Guest>
    <WindowsTaskbar />
    <Watermark>CSDN @早睡早起825</Watermark>
  </Desktop>
);

export default App;
